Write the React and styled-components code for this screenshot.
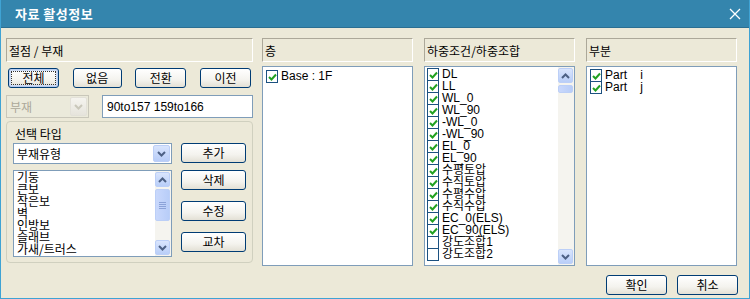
import React from 'react';
import styled, { createGlobalStyle, css } from 'styled-components';

const GlobalStyle = createGlobalStyle`
  html, body {
    margin: 0;
    padding: 0;
    background: #ece9d8;
  }
  body {
    font-family: "Liberation Sans", "Noto Sans CJK KR", sans-serif;
    font-size: 12px;
    color: #000;
  }
  * { box-sizing: border-box; }
`;

const Window = styled.div`
  width: 750px;
  height: 299px;
  display: flex;
  flex-direction: column;
  background: #ece9d8;
  border: 1px solid #3fa3d4;
  border-top: none;
  overflow: hidden;
`;

const TitleBar = styled.div`
  height: 28px;
  flex: none;
  margin: 0 -1px;
  display: flex;
  align-items: center;
  justify-content: space-between;
  padding: 0 6px 0 15px;
  background: #3485ad;
  border-bottom: 1px solid #2b6f92;
`;

const Title = styled.span`
  color: #fff;
  font-family: "Noto Sans CJK KR", sans-serif;
  font-weight: 700;
  font-size: 13px;
  letter-spacing: 0.5px;
`;

const CloseButton = styled.button`
  width: 18px;
  height: 18px;
  padding: 0;
  border: none;
  background: transparent;
  display: flex;
  align-items: center;
  justify-content: center;
`;

const Body = styled.div`
  flex: 1;
  display: flex;
  flex-direction: column;
  padding: 10px 0 0 5px;
`;

const Columns = styled.div`
  display: flex;
  align-items: flex-start;
`;

const Column = styled.div`
  display: flex;
  flex-direction: column;
  width: ${p => p.$width}px;
  margin-left: ${p => p.$offset || 0}px;
`;

const Header = styled.div`
  height: 24px;
  display: flex;
  align-items: center;
  padding-left: 2px;
  border: 1px solid #aca899;
  border-right-color: #fff;
  border-bottom-color: #fff;
  font-family: "Noto Sans CJK KR", sans-serif;
  font-size: 12px;
`;

const ButtonRow = styled.div`
  margin-top: 6px;
  display: flex;
  justify-content: space-between;
  padding: 0 2px;
`;

const XPButton = styled.button`
  width: ${p => p.$width || 64}px;
  height: 20px;
  padding: 0;
  border: 1px solid #003c74;
  border-radius: 3px;
  background: linear-gradient(#ffffff 0%, #f4f3ee 60%, #e3e0d5 100%);
  font-family: "Noto Sans CJK KR", sans-serif;
  font-size: 12px;
  line-height: 16px;
  color: #000;
  position: relative;
  ${p => p.$focused && css`
    box-shadow: inset 0 0 0 1px #b9cdf0, inset 0 0 0 2px #cfddf6;
    &::after {
      content: '';
      position: absolute;
      inset: 2px;
      border: 1px dotted #333;
    }
  `}
`;

const FieldRow = styled.div`
  margin-top: 7px;
  display: flex;
  justify-content: space-between;
`;

const Combo = styled.div`
  width: ${p => p.$width}px;
  height: ${p => p.$height || 21}px;
  display: flex;
  align-items: center;
  justify-content: space-between;
  padding: 1px 1px 1px 3px;
  border: 1px solid ${p => (p.$disabled ? '#c9c7ba' : '#7f9db9')};
  background: ${p => (p.$disabled ? '#ebeadb' : '#fff')};
  color: ${p => (p.$disabled ? '#aca899' : '#000')};
  font-family: "Noto Sans CJK KR", sans-serif;
  font-size: 12px;
`;

const DropArrow = styled.span`
  width: 17px;
  align-self: stretch;
  display: flex;
  align-items: center;
  justify-content: center;
  border-radius: 2px;
  border: 1px solid ${p => (p.$disabled ? '#e3e1d9' : '#bccff7')};
  background: ${p => (p.$disabled
    ? 'linear-gradient(#f5f4ef, #e6e4dc)'
    : 'linear-gradient(#d8e4fd, #b8cdf8)')};
`;

const TextInput = styled.div`
  width: 151px;
  height: 23px;
  display: flex;
  align-items: center;
  padding-left: 4px;
  border: 1px solid #7f9db9;
  background: #fff;
  font-size: 12px;
`;

const GroupBox = styled.div`
  margin-top: 3px;
  height: 142px;
  border: 1px solid #d0d0bf;
  border-radius: 4px;
  padding: 0 6px 0 6px;
  display: grid;
  grid-template-columns: 159px 65px;
  grid-template-rows: auto auto 1fr;
  column-gap: 9px;
`;

const Legend = styled.div`
  grid-column: 1 / 3;
  height: 21px;
  padding: 3px 0 0 2px;
  font-family: "Noto Sans CJK KR", sans-serif;
  font-size: 12px;
  color: #000;
`;

const SideButtons = styled.div`
  display: flex;
  flex-direction: column;
  gap: 11px;
  padding-top: 6px;
`;

const ListBox = styled.div`
  height: ${p => p.$height}px;
  margin-top: ${p => p.$top || 0}px;
  display: flex;
  border: 1px solid #7f9db9;
  background: #fff;
  overflow: hidden;
`;

const ListItems = styled.div`
  flex: 1;
  padding: ${p => p.$pad || '0 0 0 2px'};
  overflow: hidden;
`;

const Item = styled.div`
  height: 12px;
  display: flex;
  align-items: center;
  font-family: "Noto Sans CJK KR", sans-serif;
  font-size: 12px;
  line-height: 12px;
  white-space: pre;
`;

const CheckBox = styled.span`
  width: 12px;
  height: 13px;
  margin-bottom: -1px;
  flex: none;
  margin-right: 3px;
  border: 1px solid #1c5180;
  background: #fff;
  display: flex;
  align-items: center;
  justify-content: center;
`;

const ItemText = styled.span`
  font-family: "Liberation Sans", "Noto Sans CJK KR", sans-serif;
`;

const ScrollBar = styled.div`
  width: 16px;
  display: flex;
  flex-direction: column;
  padding: 1px 1px 1px 0;
  background: #f5f4ef;
`;

const ScrollButton = styled.span`
  height: 15px;
  display: flex;
  align-items: center;
  justify-content: center;
  border: 1px solid #bccff7;
  border-radius: 2px;
  background: linear-gradient(#d9e5fd, #b9cef8);
`;

const Track = styled.div`
  flex: 1;
  padding-top: 2px;
`;

const Thumb = styled.div`
  height: ${p => p.$height}px;
  display: flex;
  flex-direction: column;
  align-items: center;
  justify-content: center;
  gap: 1px;
  border: 1px solid #bccff7;
  border-radius: 2px;
  background: linear-gradient(90deg, #c9d8fc, #b8cdf8);
`;

const Grip = styled.span`
  width: 7px;
  height: 1px;
  background: #8ba2d8;
`;

const Footer = styled.div`
  margin-top: 9px;
  display: flex;
  justify-content: flex-end;
  gap: 10px;
  padding-right: 11px;
`;

const Chevron = ({ up, color = '#4d6185' }) => (
  <svg width="9" height="6" viewBox="0 0 9 6">
    <path
      d={up ? 'M1 5 L4.5 1.5 L8 5' : 'M1 1 L4.5 4.5 L8 1'}
      fill="none"
      stroke={color}
      strokeWidth="2"
    />
  </svg>
);

const Check = () => (
  <svg width="9" height="8" viewBox="0 0 9 8">
    <path d="M1 4 L3.5 6.5 L8 1.5" fill="none" stroke="#21a121" strokeWidth="2" />
  </svg>
);

const Scroll = ({ thumb, grip }) => (
  <ScrollBar>
    <ScrollButton><Chevron up /></ScrollButton>
    <Track>
      <Thumb $height={thumb}>
        {grip && (<><Grip /><Grip /><Grip /><Grip /></>)}
      </Thumb>
    </Track>
    <ScrollButton><Chevron /></ScrollButton>
  </ScrollBar>
);

const memberTypes = ['기둥', '큰보', '작은보', '벽', '인방보', '슬래브', '가새/트러스'];

const loads = [
  ['DL', true], ['LL', true], ['WL_0', true], ['WL_90', true],
  ['-WL_0', true], ['-WL_90', true], ['EL_0', true], ['EL_90', true],
  ['수평토압', true], ['수직토압', true], ['수평수압', true], ['수직수압', true],
  ['EC_0(ELS)', true], ['EC_90(ELS)', true], ['강도조합1', false], ['강도조합2', false],
];

const CheckItem = ({ label, checked }) => (
  <Item>
    <CheckBox>{checked && <Check />}</CheckBox>
    <ItemText>{label}</ItemText>
  </Item>
);

export default function App() {
  return (
    <>
      <GlobalStyle />
      <Window>
        <TitleBar>
          <Title>자료 활성정보</Title>
          <CloseButton>
            <svg width="12" height="12" viewBox="0 0 12 12">
              <path d="M1 1 L11 11 M11 1 L1 11" stroke="#fff" strokeWidth="1.3" />
            </svg>
          </CloseButton>
        </TitleBar>
        <Body>
          <Columns>
            <Column $width={247}>
              <Header>절점 / 부재</Header>
              <ButtonRow>
                <XPButton $width={51} $focused>전체</XPButton>
                <XPButton $width={49}>없음</XPButton>
                <XPButton $width={51}>전환</XPButton>
                <XPButton $width={51}>이전</XPButton>
              </ButtonRow>
              <FieldRow>
                <Combo $width={83} $height={23} $disabled>
                  부재
                  <DropArrow $disabled><Chevron color="#c9c7ba" /></DropArrow>
                </Combo>
                <TextInput>90to157 159to166</TextInput>
              </FieldRow>
              <GroupBox>
                <Legend>선택 타입</Legend>
                <Combo $width={159}>
                  부재유형
                  <DropArrow><Chevron /></DropArrow>
                </Combo>
                <XPButton $width={65}>추가</XPButton>
                <ListBox $height={87} $top={6}>
                  <ListItems $pad="0 0 0 3px">
                    {memberTypes.map(t => <Item key={t}>{t}</Item>)}
                  </ListItems>
                  <Scroll thumb={32} grip />
                </ListBox>
                <SideButtons>
                  <XPButton $width={65}>삭제</XPButton>
                  <XPButton $width={65}>수정</XPButton>
                  <XPButton $width={65}>교차</XPButton>
                </SideButtons>
              </GroupBox>
            </Column>

            <Column $width={151} $offset={9}>
              <Header>층</Header>
              <ListBox $height={200} $top={4}>
                <ListItems $pad="3px 0 0 3px">
                  <CheckItem label="Base : 1F" checked />
                </ListItems>
              </ListBox>
            </Column>

            <Column $width={151} $offset={11}>
              <Header>하중조건/하중조합</Header>
              <ListBox $height={200} $top={4}>
                <ListItems $pad="1px 0 0 2px">
                  {loads.map(([l, c]) => <CheckItem key={l} label={l} checked={c} />)}
                </ListItems>
                <Scroll thumb={8} />
              </ListBox>
            </Column>

            <Column $width={151} $offset={11}>
              <Header>부분</Header>
              <ListBox $height={200} $top={4}>
                <ListItems $pad="2px 0 0 3px">
                  <CheckItem label="Part    i" checked />
                  <CheckItem label="Part    j" checked />
                </ListItems>
              </ListBox>
            </Column>
          </Columns>
          <Footer>
            <XPButton $width={61}>확인</XPButton>
            <XPButton $width={61}>취소</XPButton>
          </Footer>
        </Body>
      </Window>
    </>
  );
}
